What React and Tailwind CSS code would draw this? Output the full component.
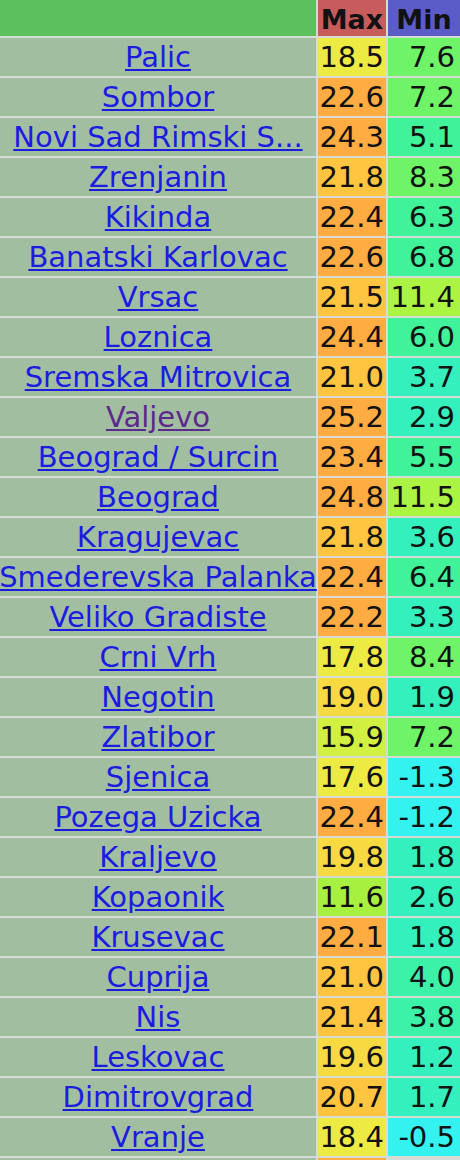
import React from "react";

const O = "bg-[#ffac42]";
const YO = "bg-[#ffc540]";
const Y1 = "bg-[#f7da42]";
const Y2 = "bg-[#eeea44]";
const YG = "bg-[#d2f042]";
const G1 = "bg-[#a8f040]";

const LG = "bg-[#6ef466]";
const GY = "bg-[#acf444]";
const GT = "bg-[#40f29a]";
const T = "bg-[#34f0bc]";
const T2 = "bg-[#3cf2a8]";
const C = "bg-[#34f2f0]";

const rows = [
  ["Palic", "18.5", Y2, "7.6", LG],
  ["Sombor", "22.6", O, "7.2", LG],
  ["Novi Sad Rimski S...", "24.3", O, "5.1", GT],
  ["Zrenjanin", "21.8", YO, "8.3", LG],
  ["Kikinda", "22.4", O, "6.3", GT],
  ["Banatski Karlovac", "22.6", O, "6.8", GT],
  ["Vrsac", "21.5", YO, "11.4", GY],
  ["Loznica", "24.4", O, "6.0", GT],
  ["Sremska Mitrovica", "21.0", YO, "3.7", T],
  ["Valjevo", "25.2", O, "2.9", T, true],
  ["Beograd / Surcin", "23.4", O, "5.5", GT],
  ["Beograd", "24.8", O, "11.5", GY],
  ["Kragujevac", "21.8", YO, "3.6", T],
  ["Smederevska Palanka", "22.4", O, "6.4", GT],
  ["Veliko Gradiste", "22.2", O, "3.3", T],
  ["Crni Vrh", "17.8", Y2, "8.4", LG],
  ["Negotin", "19.0", Y1, "1.9", T],
  ["Zlatibor", "15.9", YG, "7.2", LG],
  ["Sjenica", "17.6", Y2, "-1.3", C],
  ["Pozega Uzicka", "22.4", O, "-1.2", C],
  ["Kraljevo", "19.8", Y1, "1.8", T],
  ["Kopaonik", "11.6", G1, "2.6", T],
  ["Krusevac", "22.1", O, "1.8", T],
  ["Cuprija", "21.0", YO, "4.0", T2],
  ["Nis", "21.4", YO, "3.8", T2],
  ["Leskovac", "19.6", Y1, "1.2", T],
  ["Dimitrovgrad", "20.7", YO, "1.7", T],
  ["Vranje", "18.4", Y2, "-0.5", C],
];

export default function App() {
  return (
    <div
      className="w-[460px] h-[1160px] overflow-hidden bg-[#d6dcd4] text-[29px] text-[#111]"
      style={{ fontFamily: '"DejaVu Sans", Verdana, sans-serif' }}
    >
      <div className="grid grid-cols-[316px_68px_72px] gap-x-[2px] gap-y-[2px] w-[460px]">
        <div className="h-[36px] bg-[#5cc05c]" />
        <div className="h-[36px] bg-[#c85c5c] flex items-center justify-center font-bold text-[27px] leading-none pt-[3px] whitespace-nowrap">
          Max
        </div>
        <div className="h-[36px] bg-[#5c5cc8] flex items-center justify-center font-bold text-[27px] leading-none pt-[3px] whitespace-nowrap">
          Min
        </div>
        {rows.map(([name, max, maxBg, min, minBg, visited]) => (
          <React.Fragment key={name}>
            <div className="h-[38px] bg-[#a2bea0] flex items-center justify-center whitespace-nowrap overflow-visible">
              <a
                href="#"
                className={
                  "underline leading-none whitespace-nowrap " +
                  (visited ? "text-[#5c2a8c]" : "text-[#1c1ce0]")
                }
              >
                {name}
              </a>
            </div>
            <div className={"h-[38px] flex items-center justify-end pr-[2px] leading-none whitespace-nowrap " + maxBg}>
              {max}
            </div>
            <div className={"h-[38px] flex items-center justify-end pr-[5px] leading-none whitespace-nowrap " + minBg}>
              {min}
            </div>
          </React.Fragment>
        ))}
        <div className="h-[38px] bg-[#a2bea0]" />
        <div className={"h-[38px] " + O} />
        <div className="h-[38px] bg-[#d6dcd4]" />
      </div>
    </div>
  );
}
